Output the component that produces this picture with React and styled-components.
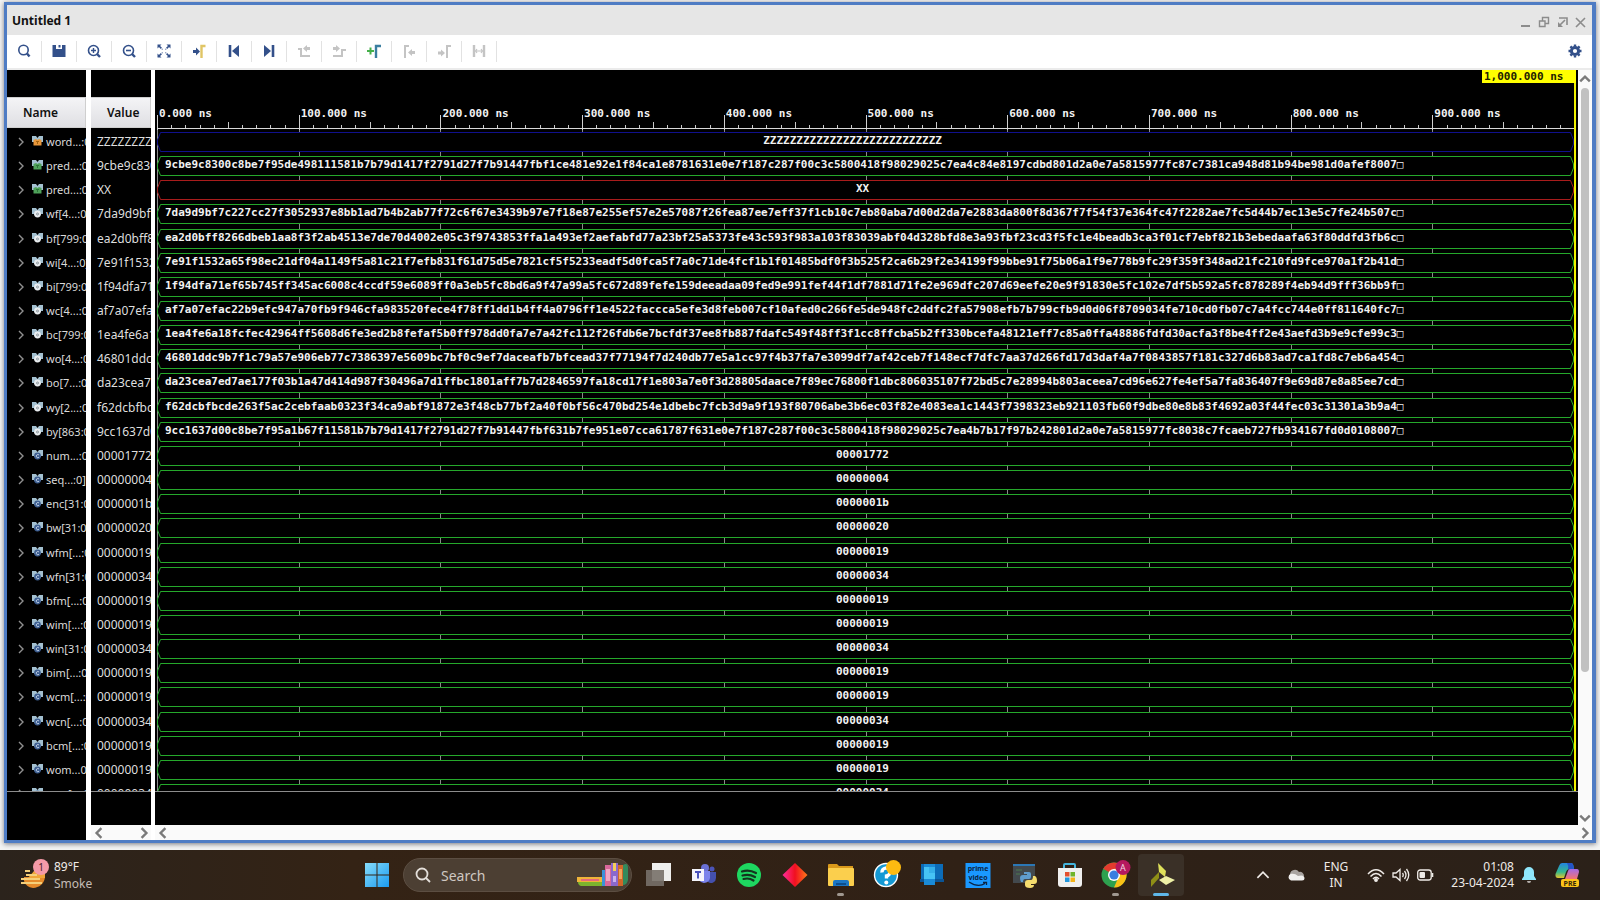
import React from "react";
import styled, { createGlobalStyle } from "styled-components";

const GlobalStyle = createGlobalStyle`
  *, *::before, *::after { box-sizing: border-box; }
  body { margin: 0; background: #f4f4f4; font-family: "Noto Sans", "Open Sans", sans-serif; }
  button { margin: 0; padding: 0; border: 0; background: none; font: inherit; color: inherit; }
  svg { display: block; flex: none; }
`;

const MONO = `"DejaVu Sans Mono", "Liberation Mono", monospace`;
const NAVY = "#33508a";
const FADED = "#c4c4c4";

/* ---------- window frame ---------- */

const Screen = styled.div`
  display: flex;
  flex-direction: column;
  height: 100vh;
  min-height: 600px;
`;

const Window = styled.main`
  display: flex;
  flex-direction: column;
  flex: 1;
  min-height: 0;
  margin: 2px 4px 7px;
  border: solid #4f7cc4;
  border-width: 3px 4px 3px 3px;
  background: #fff;
  box-shadow: 0 1px 5px #77777f;
`;

const TitleBar = styled.header`
  display: flex;
  align-items: center;
  justify-content: space-between;
  height: 30px;
  flex: none;
  padding: 2px 6px 0 5px;
  background: #e6e6e6;
`;

const Title = styled.h1`
  margin: 0;
  font-size: 12px;
  line-height: 16px;
  font-weight: 700;
  color: #111;
`;

const WindowControls = styled.div`
  display: flex;
  gap: 6px;
  padding-top: 2px;
`;

const ControlButton = styled.button`
  width: 12px;
  height: 12px;
`;

const Toolbar = styled.div`
  display: flex;
  align-items: center;
  height: 35px;
  flex: none;
  padding-bottom: 1px;
  border-bottom: 2px solid #ebebeb;
  background: #fff;
`;

const ToolButton = styled.button`
  display: flex;
  align-items: center;
  justify-content: center;
  width: 35px;
  height: 21px;
  border-right: 1px solid #e2e2e2;
`;

const SettingsButton = styled.button`
  display: flex;
  margin-left: auto;
  padding-right: 10px;
`;

/* ---------- wave viewer ---------- */

const Viewer = styled.section`
  display: flex;
  flex: 1;
  min-height: 0;
`;

const Column = styled.div`
  display: flex;
  flex-direction: column;
  flex: none;
  width: ${(p) => p.$width}px;
  margin-right: ${(p) => p.$gap}px;
  background: #000;
`;

const ColumnHeader = styled.div`
  height: 31px;
  margin: 27px 0 2px;
  flex: none;
  padding-left: ${(p) => p.$indent}px;
  border: solid #cfcfcf;
  border-width: 1px 1px 1px 0;
  background: linear-gradient(#f4f4f6, #dfdfe3);
  color: #111;
  font-size: 12px;
  font-weight: 600;
  line-height: 30px;
`;

const Rows = styled.div`
  position: relative;
  display: grid;
  grid-template-rows: repeat(27, minmax(0, 1fr)) 9px;
  flex: 1;
  min-height: 0;
  overflow: hidden;
`;

const Floor = styled.div`
  flex: none;
  height: ${(p) => p.$height}px;
  border-top: 1px solid #8c8c8c;
  background: #000;
`;

const NameRow = styled.button`
  display: flex;
  align-items: flex-start;
  min-width: 0;
  overflow: hidden;
  padding-left: 9px;
  color: #dadada;
  font-size: 11px;
  line-height: 24px;
  text-align: left;
  white-space: nowrap;

  svg { margin-top: 7px; }
  svg + svg { margin: 6px 3px 0 6px; }
`;

const ValueRow = styled.div`
  overflow: hidden;
  padding-left: 6px;
  color: #dedede;
  font-size: 12px;
  line-height: 24px;
  white-space: nowrap;
`;

const WavePane = styled.div`
  display: flex;
  flex-direction: column;
  flex: 1;
  min-width: 0;
`;

const WaveMain = styled.div`
  display: flex;
  flex: 1;
  min-height: 0;
`;

const Canvas = styled.div`
  position: relative;
  display: flex;
  flex-direction: column;
  flex: 1;
  min-width: 0;
  background: #000;
  color: #f2f2f2;
  font-family: ${MONO};
  font-size: 11px;
  font-weight: 700;
`;

const Ruler = styled.div`
  display: flex;
  flex: none;
  height: 33px;
  margin: 27px 4px 0 2px;
`;

const RulerCell = styled.div`
  flex: 1;
  min-width: 0;
  background: linear-gradient(#d0d0d0, #d0d0d0) left bottom / 1px 15px no-repeat;
`;

const RulerLabel = styled.div`
  height: 25px;
  padding: 10px 0 0 2px;
  line-height: 14px;
  white-space: nowrap;
`;

const Ticks = styled.div`
  display: flex;
  align-items: flex-end;
  height: 7px;
  border-bottom: 1px solid #d8d8d8;
`;

const Tick = styled.i`
  flex: 1;
  height: ${(p) => (p.$mid ? 6 : 3)}px;
  border-left: 1px solid ${(p) => (p.$first ? "transparent" : "#c8c8c8")};
`;

const WaveRows = styled(Rows)`
  margin: 0 4px 0 2px;
`;

const GridLines = styled.div`
  position: absolute;
  inset: 0;
  display: flex;

  i { flex: 1; border-left: 1px solid #8a8a8a; }
`;

const BusRow = styled.div`
  position: relative;
  display: flex;
  min-width: 0;
  padding-top: 2px;
  overflow: hidden;
`;

const BusBody = styled.div`
  flex: 1;
  min-width: 0;
  height: 20px;
  padding: ${(p) => (p.$long ? "0 0 0 4px" : "0 6px 0 0")};
  border: solid ${(p) => p.$color};
  border-width: 1px 0;
  background: #000;
  line-height: 16px;
  text-align: ${(p) => (p.$long ? "left" : "center")};
  white-space: pre;
  overflow: hidden;
`;

const MarkerLine = styled.div`
  position: absolute;
  top: 0;
  right: 2px;
  bottom: 34px;
  width: 2px;
  background: #f0f000;
`;

const MarkerLabel = styled.div`
  position: absolute;
  top: 0;
  right: 2px;
  width: 94px;
  height: 13px;
  padding-left: 2px;
  background: #ffff00;
  color: #222200;
  line-height: 13px;
`;

const VScroll = styled.div`
  display: flex;
  flex-direction: column;
  align-items: center;
  justify-content: space-between;
  flex: none;
  width: 14px;
  padding: 3px 0 1px;
  background: #fafafa;
`;

const VTrack = styled.div`
  flex: 1;
  width: 8px;
  padding: 3px 0;
`;

const VThumb = styled.div`
  height: 81%;
  border-radius: 4px;
  background: #c1c1c1;
`;

const HScroll = styled.div`
  display: flex;
  align-items: center;
  justify-content: space-between;
  flex: none;
  height: 15px;
  padding: 0 1px 0 2px;
  background: #fafafa;
`;

/* ---------- taskbar ---------- */

const Taskbar = styled.footer`
  display: flex;
  align-items: center;
  flex: none;
  height: 50px;
  background: linear-gradient(90deg, #2b231c, #342315 22%, #302116 60%, #2b2119);
  color: #f0ece8;
  font-size: 12px;
`;

const Weather = styled.button`
  display: flex;
  align-items: center;
  gap: 4px;
  width: 365px;
  padding-left: 20px;
  flex: none;
  text-align: left;
  line-height: 17px;

  small { display: block; font-size: 12px; color: #c4bdb7; }
`;

const StartButton = styled.button`
  width: 24px;
  margin-right: 14px;
`;

const SearchBox = styled.label`
  display: flex;
  align-items: center;
  width: 229px;
  height: 34px;
  padding: 0 2px 0 11px;
  border-radius: 17px;
  border: 1px solid #5c4e42;
  background: #4c3f33;
`;

const SearchInput = styled.input`
  flex: 1;
  min-width: 0;
  padding: 0 0 0 10px;
  border: 0;
  outline: 0;
  background: none;
  color: #fff;
  font: 14px "Noto Sans", sans-serif;

  &::placeholder { color: #cfc8c2; opacity: 1; }
`;

const Apps = styled.nav`
  display: flex;
  width: 549px;
  margin-left: 3px;
`;

const AppButton = styled.button`
  display: flex;
  flex-direction: column;
  align-items: center;
  justify-content: flex-end;
  gap: 3px;
  flex: 1;
  height: 42px;
  border-radius: 4px;
  background: ${(p) => (p.$active ? "#3a3027" : "none")};
`;

const RunMark = styled.span`
  width: ${(p) => (p.$state === "active" ? 16 : 7)}px;
  height: 3px;
  border-radius: 2px;
  background: ${(p) => ({ active: "#5fb8ea", open: "#a09890" })[p.$state] || "transparent"};
`;

const Tray = styled.div`
  display: flex;
  align-items: center;
  margin-left: auto;
  padding-right: 18px;
  line-height: 16px;
`;

const TrayButton = styled.button`
  margin-right: ${(p) => p.$after}px;
  text-align: ${(p) => p.$align || "center"};
`;

/* ---------- icons ---------- */

const Chevron = ({ dir, color = "#7a7a7a", size = 10, w = 2 }) => {
  const d = {
    right: "M3 1 L7 5 L3 9",
    left: "M7 1 L3 5 L7 9",
    up: "M1 7 L5 3 L9 7",
    down: "M1 3 L5 7 L9 3",
  }[dir];
  return (
    <svg width={size} height={size} viewBox="0 0 10 10" fill="none" stroke={color} strokeWidth={w}>
      <path d={d} />
    </svg>
  );
};

const SignalIcon = ({ kind }) => {
  const fill = { out: "#e8963a", net: "#4fa25a" }[kind];
  return (
    <svg width="11" height="11" viewBox="0 0 11 11">
      <path d="M0 0H4L5.500 2L7 0H11V6H9V7H2V6H0Z" fill="#a3c0d0" />
      {fill ? (
        <>
          <path d="M1.500 4L4 3L5.500 4L7 3L9.500 4V9.500H1.500Z" fill={fill} />
          <path d="M4 5.500H7M5.500 5.500V8" stroke={kind === "out" ? "#a3640f" : "#2d7438"} />
        </>
      ) : (
        <>
          <circle cx="5.500" cy="6" r="3.400" fill={kind === "reg" ? "#e9edf0" : "#3e5f92"} />
          <path
            d={kind === "reg" ? "M4.500 6a1 1 0 1 0 2 0a1 1 0 1 0-2 0" : "M7 5A1.600 1.600 0 1 0 7 7.200"}
            fill="none"
            stroke={kind === "reg" ? "#8d979e" : "#b9cbe2"}
          />
        </>
      )}
    </svg>
  );
};

const Tool = ({ children }) => (
  <svg width="14" height="14" viewBox="0 0 14 14" fill="none" stroke={NAVY} strokeWidth="1.6">
    {children}
  </svg>
);

const TOOLS = [
  ["Find", <><circle cx="6.500" cy="6" r="4.700" /><path d="M10 9.500L12.500 12.500" strokeWidth="2.400" /></>],
  ["Save", <path d="M.5 1H4V5H10V1H13.500V13H.5ZM6.500 1H8.500V3.500H6.500Z" fill={NAVY} stroke="none" />],
  ["Zoom in", <><circle cx="6.500" cy="6.500" r="5" /><path d="M4 6.500H9M6.500 4V9" strokeWidth="1.400" /><path d="M10 10L13 13" strokeWidth="2.400" /></>],
  ["Zoom out", <><circle cx="6.500" cy="6.500" r="5" /><path d="M4 6.500H9" /><path d="M10 10L13 13" strokeWidth="2.400" /></>],
  ["Zoom fit", <><path d="M2 2L5.500 5.500M12 2L8.500 5.500M2 12L5.500 8.500M12 12L8.500 8.500" strokeDasharray="3.400 1" /><path d="M.5 .5H4.500L.5 4.500ZM13.500 .5V4.500L9.500 .5ZM.5 13.500V9.500L4.500 13.500ZM13.500 13.500H9.500L13.500 9.500Z" fill={NAVY} stroke="none" /></>],
  ["Go to cursor", <><path d="M1 6H4V3.500L8 7.500L4 11.500V9H1Z" fill={NAVY} stroke="none" /><path d="M9.500 14V2H13.500" stroke="#e0c565" strokeWidth="2.400" /></>],
  ["First transition", <><path d="M3 1V13" strokeWidth="2.600" /><path d="M12 1V13L5 7Z" fill={NAVY} stroke="none" /></>],
  ["Last transition", <><path d="M11 1V13" strokeWidth="2.600" /><path d="M2 1V13L9 7Z" fill={NAVY} stroke="none" /></>],
  ["Previous transition", <><path d="M1 5H4V12H13" stroke={FADED} strokeWidth="2" /><path d="M13 3V6H10V8L6 4.500L10 1V3Z" fill={FADED} stroke="none" /></>],
  ["Next transition", <><path d="M1 12H10V6H14" stroke={FADED} strokeWidth="2" /><path d="M1 3V6H4V8L8 4.500L4 1V3Z" fill={FADED} stroke="none" /></>],
  ["Add marker", <><path d="M0 7H7M3.500 3.500V10.500" stroke="#45b04a" strokeWidth="2" /><path d="M9 14V2H14" stroke="#3a7ea0" strokeWidth="2.400" /></>],
  ["Previous marker", <><path d="M3 14V2H7" stroke={FADED} strokeWidth="2" /><path d="M13 7V10H10V12L6 8.500L10 5V7Z" fill={FADED} stroke="none" /></>],
  ["Next marker", <><path d="M10 14V2H14" stroke={FADED} strokeWidth="2" /><path d="M1 7.500V10.500H4V12.500L8 9L4 5.500V7.500Z" fill={FADED} stroke="none" /></>],
  ["Swap cursors", <><path d="M2 1V13M12 1V13" stroke={FADED} strokeWidth="2.400" /><path d="M3 7H11M5 5L3.500 7L5 9M9 5L10.500 7L9 9" stroke={FADED} strokeWidth="1.200" /></>],
];

const Gear = () => (
  <svg width="14" height="14" viewBox="0 0 14 14">
    <g fill="none" stroke={NAVY}>
      <circle cx="7" cy="7" r="3.600" strokeWidth="3" />
      <path d="M7 .5V2.500M7 11.500V13.500M.5 7H2.500M11.500 7H13.500M2.400 2.400L3.800 3.800M10.200 10.200L11.600 11.600M2.400 11.600L3.800 10.200M10.200 3.800L11.600 2.400" strokeWidth="2.400" />
    </g>
  </svg>
);

const CONTROLS = [
  ["Minimize", <path d="M1 10H10" strokeWidth="2" />],
  ["Restore", <path d="M1.500 5H7V10.500H1.500ZM4.500 5V1.500H10.500V7.500H7" strokeWidth="1.400" />],
  ["Float", <><path d="M3 2H11V9M9 4L4 9" strokeWidth="1.600" /><path d="M2 6V11H7Z" fill="#8c8c8c" stroke="none" /></>],
  ["Close", <path d="M2 2L11 11M11 2L2 11" strokeWidth="1.600" />],
];

const Pic = ({ children }) => (
  <svg width="28" height="30" viewBox="0 0 28 30">{children}</svg>
);

const APPS = [
  ["Task view", "", <Pic><rect x="8" y="3" width="19" height="18" fill="#eeeeec" /><rect x="2" y="10" width="18" height="16" fill="#777069" opacity=".9" /></Pic>],
  ["Teams", "", <Pic><circle cx="15" cy="8" r="4" fill="#6a70d4" /><circle cx="22" cy="9" r="2.500" fill="#4c54b8" /><path d="M18 12H26V18A5 5 0 0 1 18 22Z" fill="#4450ae" /><path d="M9 11H20V18A6 6 0 0 1 9 20Z" fill="#7b83eb" /><rect x="2" y="9" width="12" height="12" fill="#f4f4fb" /><path d="M5 12H11M8 12V18.500" stroke="#4b53bc" strokeWidth="2" /></Pic>],
  ["Spotify", "", <Pic><circle cx="14" cy="15" r="12" fill="#1ed760" /><path d="M7 11.500Q14 9 21 13M7.500 15.500Q14 13.500 20 17M8.500 19Q14 17.500 18.500 20.500" stroke="#14351f" strokeWidth="2.200" fill="none" strokeLinecap="round" /></Pic>],
  ["Diamond", "", <Pic><defs><linearGradient id="dm"><stop offset="0" stopColor="#ff2c9c" /><stop offset=".5" stopColor="#f01020" /><stop offset="1" stopColor="#ff7a1a" /></linearGradient></defs><path d="M14 3L26.500 15L14 27L1.500 15Z" fill="url(#dm)" /></Pic>],
  ["File Explorer", "open", <Pic><path d="M1 5a1 1 0 0 1 1-1H10L12 6H26V10H1Z" fill="#d9991b" /><rect x="1" y="8" width="26" height="18" rx="1" fill="#fbcf4d" /><path d="M6 26V22a2 2 0 0 1 2-2H20a2 2 0 0 1 2 2V26Z" fill="#1b76c4" /><path d="M9 24H19" stroke="#0d4f8e" strokeWidth="2" /></Pic>],
  ["Help", "", <Pic><circle cx="13" cy="15" r="11.500" fill="#1499d4" stroke="#fff" strokeWidth="1.400" /><path d="M9 12.500A4 4 0 1 1 13.500 16V18.500" stroke="#fff" strokeWidth="3.400" fill="none" /><circle cx="13.300" cy="22.500" r="2" fill="#fff" /><circle cx="20.500" cy="7.500" r="7.500" fill="#fdbb11" /></Pic>],
  ["Phone Link", "", <Pic><rect x="3" y="4" width="22" height="15" fill="#0c6cb8" /><path d="M2 19H26V22H2Z" fill="#0a5495" /><rect x="6" y="4" width="11" height="21" fill="#1a8ad6" /><rect x="6" y="7" width="11" height="12" fill="#46c3f5" /><rect x="11" y="7" width="6" height="6" fill="#35b0ea" /></Pic>],
  ["Prime Video", "", <Pic><rect x="1.500" y="3" width="25" height="25" fill="#1a98ff" /><text x="14" y="11" textAnchor="middle" fontSize="7" fontWeight="700" fontFamily="Noto Sans, sans-serif" fill="#0b2545">prime</text><text x="14" y="20" textAnchor="middle" fontSize="7" fontWeight="700" fontFamily="Noto Sans, sans-serif" fill="#0b2545">video</text><path d="M5 22Q14 28 21 23.500M19 22.500H22.500V25" stroke="#0b2545" fill="none" strokeWidth="1.300" /></Pic>],
  ["Python", "", <Pic><rect x="3" y="4" width="22" height="19" fill="#43494d" /><path d="M3 4H25V6H3Z" fill="#2b77b5" /><path d="M6 10H12M6 14H10" stroke="#4c7a4e" /><path d="M14 12h5q2 0 2 2v3q0 2-2 2h-4q-2 0-2 3h-2q-1-2-1-4q0-3 3-3h4v-1h-3Z" fill="#5f9ccc" /><path d="M23 16h2q2 1 2 5q0 3-3 3h-3v1h3q0 3-4 3q-5 0-5-3v-2q0-3 3-3h3q2 0 2-4Z" fill="#f5dc6e" /></Pic>],
  ["Microsoft Store", "", <Pic><path d="M8 9V5a1 1 0 0 1 1-1H18a1 1 0 0 1 1 1V9" stroke="#45b5dd" strokeWidth="2" fill="none" /><path d="M2 8H26V24a3 3 0 0 1-3 3H5a3 3 0 0 1-3-3Z" fill="#f0f0ef" /><path d="M9 12H13.500V16.500H9Z" fill="#e4502d" /><path d="M14.500 12H19V16.500H14.500Z" fill="#6fb52c" /><path d="M9 17.500H13.500V22H9Z" fill="#2197dd" /><path d="M14.500 17.500H19V22H14.500Z" fill="#f4b41a" /></Pic>],
  ["Chrome", "open", <svg width="32" height="30" viewBox="0 0 32 30"><circle cx="15" cy="15" r="12.500" fill="#2ea14f" /><path d="M4.200 8.700A12.500 12.500 0 0 1 25.800 8.700L15 15Z" fill="#e33b2e" /><path d="M25.800 8.700A12.500 12.500 0 0 1 15 27.500L20 16L15 8.700Z" fill="#fbc116" /><circle cx="15" cy="15" r="6" fill="#fff" /><circle cx="15" cy="15" r="4.600" fill="#3b7de0" /><circle cx="24" cy="7.500" r="7.500" fill="#b5185e" /><text x="24" y="11" textAnchor="middle" fontSize="9" fontFamily="Noto Sans, sans-serif" fill="#f3d6e2">A</text></svg>],
  ["Vivado", "active", <Pic><path d="M11 3L19 11L18 17L12 12Z" fill="#dfe15a" /><path d="M4 20L12 12L12 18L4 27Z" fill="#8f8f16" /><path d="M12 20L19 16L28 20L19 25Z" fill="#eef0a6" /></Pic>],
];

const WeatherIcon = () => (
  <svg width="30" height="32" viewBox="0 0 30 32">
    <path d="M4 18H25A12 12 0 0 1 13 29Q6 28 4 22Z" fill="#e58a2a" />
    <path d="M14 12H25V19H8Z" fill="#f0a63a" />
    <path d="M5 12H10M6 16H17M1 20H20M1 24H22" stroke="#f5cf7a" strokeWidth="2" />
    <circle cx="21" cy="8" r="8" fill="#f59aa8" />
    <text x="21" y="12" textAnchor="middle" fontSize="10" fontFamily="Noto Sans, sans-serif" fill="#4a2027">1</text>
  </svg>
);

const WindowsLogo = () => (
  <svg width="24" height="24" viewBox="0 0 24 24">
    <defs>
      <linearGradient id="wl" x1="0" y1="0" x2="1" y2="1">
        <stop offset="0" stopColor="#86dcfb" />
        <stop offset="1" stopColor="#1b9bf0" />
      </linearGradient>
    </defs>
    <path d="M0 0H11.500V11.500H0ZM12.500 0H24V11.500H12.500ZM0 12.500H11.500V24H0ZM12.500 12.500H24V24H12.500Z" fill="url(#wl)" />
  </svg>
);

const Books = () => (
  <svg width="52" height="26" viewBox="0 0 52 26">
    <rect x="0" y="15" width="25" height="5" fill="#f0b43a" />
    <rect x="4" y="17" width="18" height="2" fill="#e4687c" />
    <path d="M1 20H25V24H4Q1 23 1 20Z" fill="#7cb42e" />
    <rect x="25" y="8" width="3" height="16" fill="#3b92d8" />
    <rect x="28" y="3" width="6" height="21" fill="#d8689a" />
    <rect x="29" y="7" width="4" height="12" fill="#f0a8c4" />
    <rect x="34" y="1" width="7" height="23" fill="#8a68cc" />
    <rect x="36" y="1" width="3" height="8" fill="#f3cf58" />
    <rect x="36" y="14" width="3" height="6" fill="#c9b2ee" />
    <rect x="41" y="3" width="5" height="21" fill="#d0662a" />
    <rect x="42" y="7" width="3" height="10" fill="#f1a45a" />
    <path d="M46 3Q51 0 51 6V18Q50 23 46 23Z" fill="#338a5c" />
  </svg>
);

const Cloud = () => (
  <svg width="18" height="12" viewBox="0 0 18 12">
    <path d="M3 5A5 5 0 0 1 12 3A4 4 0 0 1 17 7H3Z" fill="#a8a3a0" />
    <path d="M4 11.500A3.500 3.500 0 0 1 4 4.800Q8 4 11 7Q17 5.500 17.500 9Q17.500 11.500 15 11.500Z" fill="#f0efee" />
  </svg>
);

const Wifi = () => (
  <svg width="18" height="14" viewBox="0 0 18 14" fill="none" stroke="#efebe7" strokeWidth="1.500">
    <path d="M1 6Q9 -2.500 17 6M3.500 8.500Q9 2.500 14.500 8.500M6 11Q9 7.500 12 11" />
    <circle cx="9" cy="12" r="1.200" fill="#efebe7" />
  </svg>
);

const Speaker = () => (
  <svg width="18" height="14" viewBox="0 0 18 14" fill="none" stroke="#efebe7" strokeWidth="1.300">
    <path d="M1 5V9H4L8 12.500V1.500L4 5ZM10.500 5Q12 7 10.500 9M12.500 3Q15.500 7 12.500 11M14.500 1Q19 7 14.500 13" />
  </svg>
);

const Battery = () => (
  <svg width="17" height="12" viewBox="0 0 17 12">
    <rect x=".7" y="1" width="13.500" height="10" rx="2.500" fill="none" stroke="#efebe7" strokeWidth="1.300" />
    <rect x="2.500" y="3" width="5.500" height="6" rx="1" fill="#efebe7" />
    <path d="M15.500 4V8" stroke="#efebe7" strokeWidth="1.600" />
  </svg>
);

const Bell = () => (
  <svg width="14" height="18" viewBox="0 0 14 18">
    <path d="M0 13L2 10V6A5 5 0 0 1 12 6V10L14 13V14H0Z" fill="#8fe6fb" />
    <path d="M5 15H9Q9 17 7 17Q5 17 5 15Z" fill="#b7b2ae" />
  </svg>
);

const Copilot = () => (
  <svg width="25" height="25" viewBox="0 0 25 25">
    <defs>
      <linearGradient id="c1" x1="0" y1="0" x2="0" y2="1">
        <stop offset="0" stopColor="#2385e0" />
        <stop offset=".6" stopColor="#35b98c" />
        <stop offset="1" stopColor="#e6c52c" />
      </linearGradient>
      <linearGradient id="c2" x1="0" y1="0" x2="0" y2="1">
        <stop offset="0" stopColor="#a36ae6" />
        <stop offset="1" stopColor="#f4736e" />
      </linearGradient>
    </defs>
    <path d="M7 0H16Q18 0 18.500 3L19 6H15Q12 6 11 9L9 15H3Q0 15 .5 11L4 3Q5 0 7 0Z" fill="url(#c1)" />
    <path d="M12 0H16Q18 0 18.500 3L19 6H13Q14 3 12 0Z" fill="#2454c8" />
    <path d="M15 6H22Q24 6 24 9L22 16H10L13 8Q13.500 6 15 6Z" fill="url(#c2)" />
    <rect x="6" y="16" width="18" height="8" rx="2" fill="#fcc419" />
    <text x="15" y="23" textAnchor="middle" fontSize="7" fontWeight="700" fontFamily="Noto Sans, sans-serif" fill="#33270a">PRE</text>
  </svg>
);

/* ---------- data ---------- */

const GREEN = "#25a82b";
const BOX = "\u25A1";

const bus = (name, value, kind, wave, color = GREEN) => ({ name, value, kind, wave: wave || value, color });

const SIGNALS = [
  bus("word...:0]", "ZZZZZZZZ", "out", "ZZZZZZZZZZZZZZZZZZZZZZZZZZZ   ", "#10108c"),
  bus("pred...:0]", "9cbe9c8300", "net", "9cbe9c8300c8be7f95de498111581b7b79d1417f2791d27f7b91447fbf1ce481e92e1f84ca1e8781631e0e7f187c287f00c3c5800418f98029025c7ea4c84e8197cdbd801d2a0e7a5815977fc87c7381ca948d81b94be981d0afef8007" + BOX),
  bus("pred...:0]", "XX", "net", "XX", "#a81c1c"),
  bus("wf[4...:0]", "7da9d9bf7c", "reg", "7da9d9bf7c227cc27f3052937e8bb1ad7b4b2ab77f72c6f67e3439b97e7f18e87e255ef57e2e57087f26fea87ee7eff37f1cb10c7eb80aba7d00d2da7e2883da800f8d367f7f54f37e364fc47f2282ae7fc5d44b7ec13e5c7fe24b507c" + BOX),
  bus("bf[799:0]", "ea2d0bff82", "reg", "ea2d0bff8266dbeb1aa8f3f2ab4513e7de70d4002e05c3f9743853ffa1a493ef2aefabfd77a23bf25a5373fe43c593f983a103f83039abf04d328bfd8e3a93fbf23cd3f5fc1e4beadb3ca3f01cf7ebf821b3ebedaafa63f80ddfd3fb6c" + BOX),
  bus("wi[4...:0]", "7e91f1532a", "reg", "7e91f1532a65f98ec21df04a1149f5a81c21f7efb831f61d75d5e7821cf5f5233eadf5d0fca5f7a0c71de4fcf1b1f01485bdf0f3b525f2ca6b29f2e34199f99bbe91f75b06a1f9e778b9fc29f359f348ad21fc210fd9fce970a1f2b41d" + BOX),
  bus("bi[799:0]", "1f94dfa71e", "reg", "1f94dfa71ef65b745ff345ac6008c4ccdf59e6089ff0a3eb5fc8bd6a9f47a99a5fc672d89fefe159deeadaa09fed9e991fef44f1df7881d71fe2e969dfc207d69eefe20e9f91830e5fc102e7df5b592a5fc878289f4eb94d9fff36bb9f" + BOX),
  bus("wc[4...:0]", "af7a07efac", "reg", "af7a07efac22b9efc947a70fb9f946cfa983520fece4f78ff1dd1b4ff4a0796ff1e4522faccca5efe3d8feb007cf10afed0c266fe5de948fc2ddfc2fa57908efb7b799cfb9d0d06f8709034fe710cd0fb07c7a4fcc744e0ff811640fc7" + BOX),
  bus("bc[799:0]", "1ea4fe6a18", "reg", "1ea4fe6a18fcfec42964ff5608d6fe3ed2b8fefaf5b0ff978dd0fa7e7a42fc112f26fdb6e7bcfdf37ee8fb887fdafc549f48ff3f1cc8ffcba5b2ff330bcefa48121eff7c85a0ffa48886fdfd30acfa3f8be4ff2e43aefd3b9e9cfe99c3" + BOX),
  bus("wo[4...:0]", "46801ddc9b", "reg", "46801ddc9b7f1c79a57e906eb77c7386397e5609bc7bf0c9ef7daceafb7bfcead37f77194f7d240db77e5a1cc97f4b37fa7e3099df7af42ceb7f148ecf7dfc7aa37d266fd17d3daf4a7f0843857f181c327d6b83ad7ca1fd8c7eb6a454" + BOX),
  bus("bo[7...:0]", "da23cea7ed", "reg", "da23cea7ed7ae177f03b1a47d414d987f30496a7d1ffbc1801aff7b7d2846597fa18cd17f1e803a7e0f3d28805daace7f89ec76800f1dbc806035107f72bd5c7e28994b803aceea7cd96e627fe4ef5a7fa836407f9e69d87e8a85ee7cd" + BOX),
  bus("wy[2...:0]", "f62dcbfbcd", "reg", "f62dcbfbcde263f5ac2cebfaab0323f34ca9abf91872e3f48cb77bf2a40f0bf56c470bd254e1dbebc7fcb3d9a9f193f80706abe3b6ec03f82e4083ea1c1443f7398323eb921103fb60f9dbe80e8b83f4692a03f44fec03c31301a3b9a4" + BOX),
  bus("by[863:0]", "9cc1637d00", "reg", "9cc1637d00c8be7f95a1b67f11581b7b79d1417f2791d27f7b91447fbf631b7fe951e07cca61787f631e0e7f187c287f00c3c5800418f98029025c7ea4b7b17f97b242801d2a0e7a5815977fc8038c7fcaeb727fb934167fd0d0108007" + BOX),
  bus("num...:0]", "00001772"),
  bus("seq...:0]", "00000004"),
  bus("enc[31:0]", "0000001b"),
  bus("bw[31:0]", "00000020"),
  bus("wfm[...:0]", "00000019"),
  bus("wfn[31:0]", "00000034"),
  bus("bfm[...:0]", "00000019"),
  bus("wim[...:0]", "00000019"),
  bus("win[31:0]", "00000034"),
  bus("bim[...:0]", "00000019"),
  bus("wcm[...:0]", "00000019"),
  bus("wcn[...:0]", "00000034"),
  bus("bcm[...:0]", "00000019"),
  bus("wom...0]", "00000019"),
  bus("won[...:0]", "00000034"),
];

const HUNDREDS = [0, 1, 2, 3, 4, 5, 6, 7, 8, 9];

const BusWave = ({ wave, color }) => (
  <BusRow>
    <svg width="4" height="20" viewBox="0 0 4 20" fill="#000" stroke={color}>
      <path d="M4 .5H3.500L.5 8V12L3.500 19.500H4" />
    </svg>
    <BusBody $color={color} $long={wave.length > 100}>{wave}</BusBody>
    <svg width="4" height="20" viewBox="0 0 4 20" fill="#000" stroke={color}>
      <path d="M0 .5H.5L3.500 8V12L.5 19.500H0" />
    </svg>
  </BusRow>
);

export default function App() {
  return (
    <Screen>
      <GlobalStyle />
      <Window>
        <TitleBar>
          <Title>Untitled 1</Title>
          <WindowControls>
            {CONTROLS.map(([label, art]) => (
              <ControlButton key={label} aria-label={label}>
                <svg width="12" height="12" viewBox="0 0 12 12" fill="none" stroke="#8c8c8c">{art}</svg>
              </ControlButton>
            ))}
          </WindowControls>
        </TitleBar>
        <Toolbar>
          {TOOLS.map(([label, art]) => (
            <ToolButton key={label} aria-label={label}><Tool>{art}</Tool></ToolButton>
          ))}
          <SettingsButton aria-label="Settings"><Gear /></SettingsButton>
        </Toolbar>
        <Viewer>
          <Column $width={79} $gap={5}>
            <ColumnHeader $indent={16}>Name</ColumnHeader>
            <Rows>
              {SIGNALS.map((s, i) => (
                <NameRow key={i}>
                  <Chevron dir="right" color="#909090" w={1.4} />
                  <SignalIcon kind={s.kind} />
                  {s.name}
                </NameRow>
              ))}
            </Rows>
            <Floor $height={49} />
          </Column>
          <Column $width={60} $gap={4}>
            <ColumnHeader $indent={16}>Value</ColumnHeader>
            <Rows>
              {SIGNALS.map((s, i) => <ValueRow key={i}>{s.value}</ValueRow>)}
            </Rows>
            <Floor $height={34} />
            <HScroll>
              <Chevron dir="left" size={12} />
              <Chevron dir="right" size={12} />
            </HScroll>
          </Column>
          <WavePane>
            <WaveMain>
              <Canvas>
                <Ruler>
                  {HUNDREDS.map((n) => (
                    <RulerCell key={n}>
                      <RulerLabel>{n * 100}.000 ns</RulerLabel>
                      <Ticks>
                        {HUNDREDS.map((t) => <Tick key={t} $first={t === 0} $mid={t === 5} />)}
                      </Ticks>
                    </RulerCell>
                  ))}
                </Ruler>
                <WaveRows>
                  <GridLines>{HUNDREDS.map((n) => <i key={n} />)}</GridLines>
                  {SIGNALS.map((s, i) => <BusWave key={i} wave={s.wave} color={s.color} />)}
                </WaveRows>
                <Floor $height={34} />
                <MarkerLine />
                <MarkerLabel>1,000.000 ns</MarkerLabel>
              </Canvas>
              <VScroll>
                <Chevron dir="up" size={12} />
                <VTrack><VThumb /></VTrack>
                <Chevron dir="down" size={12} />
              </VScroll>
            </WaveMain>
            <HScroll>
              <Chevron dir="left" size={12} />
              <Chevron dir="right" size={12} />
            </HScroll>
          </WavePane>
        </Viewer>
      </Window>
      <Taskbar>
        <Weather>
          <WeatherIcon />
          <span>89°F<small>Smoke</small></span>
        </Weather>
        <StartButton aria-label="Start"><WindowsLogo /></StartButton>
        <SearchBox>
          <svg width="16" height="16" viewBox="0 0 16 16" fill="none" stroke="#e4dfda" strokeWidth="1.800">
            <circle cx="7" cy="7" r="5.500" /><path d="M11 11L15 15" />
          </svg>
          <SearchInput type="text" placeholder="Search" aria-label="Search" />
          <Books />
        </SearchBox>
        <Apps>
          {APPS.map(([label, state, art]) => (
            <AppButton key={label} aria-label={label} $active={state === "active"}>
              {art}
              <RunMark $state={state} />
            </AppButton>
          ))}
        </Apps>
        <Tray>
          <TrayButton $after={17} aria-label="Show hidden icons"><Chevron dir="up" color="#efebe7" size={14} w={1.2} /></TrayButton>
          <TrayButton $after={19} aria-label="OneDrive"><Cloud /></TrayButton>
          <TrayButton $after={19}>ENG<br />IN</TrayButton>
          <TrayButton $after={7} aria-label="Wi-Fi"><Wifi /></TrayButton>
          <TrayButton $after={7} aria-label="Volume"><Speaker /></TrayButton>
          <TrayButton $after={17} aria-label="Battery"><Battery /></TrayButton>
          <TrayButton $after={8} $align="right">01:08<br />23-04-2024</TrayButton>
          <TrayButton $after={19} aria-label="Notifications"><Bell /></TrayButton>
          <TrayButton $after={2} aria-label="Copilot"><Copilot /></TrayButton>
        </Tray>
      </Taskbar>
    </Screen>
  );
}
